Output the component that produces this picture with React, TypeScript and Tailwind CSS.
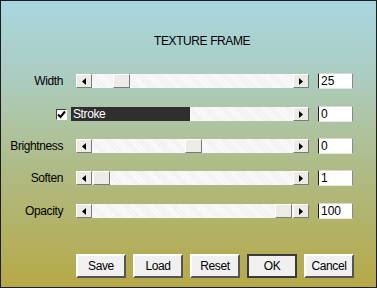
import type { ReactNode } from "react";

const font = { fontFamily: '"Liberation Sans", Arial, sans-serif' };

function Arrow({ dir }: { dir: "left" | "right" }) {
  return (
    <div className="flex h-[14px] w-[16px] shrink-0 items-center justify-center border border-t-white border-l-white border-r-[#7a7a7a] border-b-[#7a7a7a] bg-[#ecebe6]">
      <svg width="4" height="7" viewBox="0 0 4 7">
        {dir === "left" ? (
          <path d="M4 0 L0 3.5 L4 7 Z" fill="#000" />
        ) : (
          <path d="M0 0 L4 3.5 L0 7 Z" fill="#000" />
        )}
      </svg>
    </div>
  );
}

function Thumb({ pos }: { pos: string }) {
  return (
    <div
      className={`absolute top-0 h-[14px] w-[17px] border border-t-white border-l-white border-r-[#7a7a7a] border-b-[#7a7a7a] bg-[#ecebe6] ${pos}`}
    />
  );
}

function Track({ children }: { children?: ReactNode }) {
  return (
    <div className="relative h-[14px] flex-1 bg-[#f6f6f6] bg-[repeating-linear-gradient(45deg,#fbfbfb_0px,#fbfbfb_1px,#f0f0f0_1px,#f0f0f0_2px)]">
      {children}
    </div>
  );
}

function ValueBox({ value }: { value: string }) {
  return (
    <div className="ml-[9px] flex h-[16px] w-[35px] items-center border border-l-[#202020] border-t-[#d8d8d8] border-r-[#8a8a8a] border-b-[#e8e8e8] bg-white pl-[2px] text-[12px] leading-none text-black">
      {value}
    </div>
  );
}

const rows = [
  { label: "Width", value: "25", thumb: "left-[21px]", mt: "mt-[25px]" },
  { label: "Brightness", value: "0", thumb: "left-[93px]", mt: "mt-[16px]" },
  { label: "Soften", value: "1", thumb: "left-[1px]", mt: "mt-[16px]" },
  { label: "Opacity", value: "100", thumb: "left-[183px]", mt: "mt-[17px]" },
];

function SliderRow({ row }: { row: (typeof rows)[number] }) {
  return (
    <div className={`flex h-[16px] items-center ${row.mt}`}>
      <div className="w-[62px] text-right text-[12px] tracking-[-0.4px] text-black">{row.label}</div>
      <div className="ml-[13px] flex w-[233px]">
        <Arrow dir="left" />
        <Track>
          <Thumb pos={row.thumb} />
        </Track>
        <Arrow dir="right" />
      </div>
      <ValueBox value={row.value} />
    </div>
  );
}

function StrokeRow() {
  return (
    <div className="mt-[17px] flex h-[16px] items-center">
      <div className="ml-[55px] flex h-[11px] w-[11px] items-center justify-center border border-l-[#404040] border-t-[#404040] border-r-white border-b-white bg-white">
        <svg width="9" height="9" viewBox="0 0 9 9">
          <path d="M1 4.5 L3.5 7 L8 1.5" stroke="#000" strokeWidth="2" fill="none" />
        </svg>
      </div>
      <div className="ml-[4px] flex w-[238px]">
        <div className="flex h-[14px] w-[119px] items-center bg-[#2f2f2f] pl-[2px] text-[12px] tracking-[-0.4px] text-white">
          Stroke
        </div>
        <Track />
        <Arrow dir="right" />
      </div>
      <ValueBox value="0" />
    </div>
  );
}

function Button({ label, primary }: { label: string; primary?: boolean }) {
  return (
    <button
      className={`flex h-[24px] w-[50px] items-center justify-center bg-[#f0f0f0] text-[12px] tracking-[-0.4px] text-black ${
        primary
          ? "border-2 border-t-[#3a3a3a] border-l-[#3a3a3a] border-r-[#3a3a3a] border-b-[#3a3a3a]"
          : "border-2 border-t-white border-l-white border-r-[#555555] border-b-[#555555]"
      }`}
    >
      {label}
    </button>
  );
}

export default function App() {
  return (
    <div
      style={font}
      className="h-[288px] w-[377px] overflow-hidden border border-[#1c1c1c] bg-[linear-gradient(180deg,#a8d6e0_0%,#abcdc2_25%,#aec39e_45%,#b0b87c_65%,#b6a947_100%)]"
    >
      <div className="pl-[153px] pt-[34px] text-[12px] leading-[13px] tracking-[-0.4px] text-black">
        TEXTURE FRAME
      </div>
      <SliderRow row={rows[0]} />
      <StrokeRow />
      <SliderRow row={rows[1]} />
      <SliderRow row={rows[2]} />
      <SliderRow row={rows[3]} />
      <div className="mt-[35px] flex gap-[7px] pl-[75px]">
        <Button label="Save" />
        <Button label="Load" />
        <Button label="Reset" />
        <Button label="OK" primary />
        <Button label="Cancel" />
      </div>
    </div>
  );
}
